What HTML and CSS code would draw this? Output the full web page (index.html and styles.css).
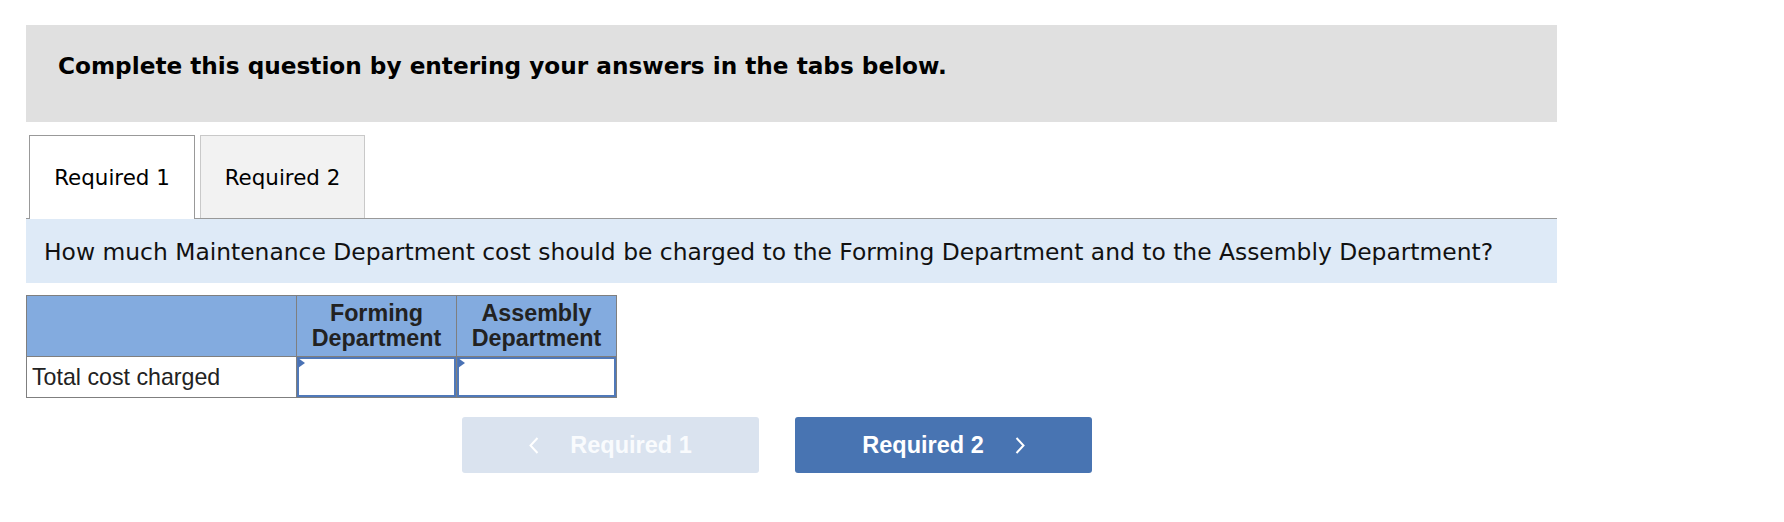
FILE: index.html
```html
<!DOCTYPE html>
<html lang="en">
<head>
<meta charset="utf-8">
<title>Required 1</title>
<link rel="stylesheet" href="styles.css">
</head>
<body>
<div class="wrap">
  <div class="banner">Complete this question by entering your answers in the tabs below.</div>

  <div class="tabs">
    <div class="tab tab-active">Required 1</div>
    <div class="tab tab-inactive">Required 2</div>
  </div>

  <div class="question">How much Maintenance Department cost should be charged to the Forming Department and to the Assembly Department?</div>

  <table class="grid">
    <colgroup>
      <col class="col-label">
      <col class="col-val">
      <col class="col-val">
    </colgroup>
    <thead>
      <tr>
        <th class="head-blank"></th>
        <th class="head">Forming<br>Department</th>
        <th class="head">Assembly<br>Department</th>
      </tr>
    </thead>
    <tbody>
      <tr>
        <td class="label">Total cost charged</td>
        <td class="cell"><div class="input"></div></td>
        <td class="cell"><div class="input"></div></td>
      </tr>
    </tbody>
  </table>

  <div class="nav">
    <div class="btn btn-prev">
      <svg class="chev" width="10" height="17" viewBox="0 0 10 17"><polyline points="8.5,1 1.5,8.5 8.5,16" fill="none" stroke="#ffffff" stroke-width="2"/></svg>
      <span>Required 1</span>
    </div>
    <div class="btn btn-next">
      <span>Required 2</span>
      <svg class="chev" width="10" height="17" viewBox="0 0 10 17"><polyline points="1.5,1 8.5,8.5 1.5,16" fill="none" stroke="#ffffff" stroke-width="2"/></svg>
    </div>
  </div>
</div>
</body>
</html>
```
FILE: styles.css
```css
html, body {
  margin: 0;
  padding: 0;
  background: #ffffff;
}

body {
  font-family: "DejaVu Sans", Verdana, sans-serif;
  color: #000;
}

.wrap {
  width: 1531px;
  padding: 25px 0 0 26px;
}

.banner {
  box-sizing: border-box;
  height: 97px;
  background: #e0e0e0;
  padding: 27px 0 0 32px;
  font-size: 23.2px;
  font-weight: bold;
  color: #000;
}

.tabs {
  display: flex;
  align-items: flex-start;
  gap: 5px;
  margin-top: 13px;
  padding-left: 3px;
  height: 83px;
  border-bottom: 1px solid #999999;
}

.tab {
  box-sizing: border-box;
  display: flex;
  align-items: center;
  justify-content: center;
  font-size: 21.4px;
  color: #000;
}

.tab-active {
  width: 166px;
  height: 84px;
  background: #ffffff;
  border: 1px solid #999999;
  border-bottom: none;
  position: relative;
  z-index: 1;
}

.tab-inactive {
  width: 165px;
  height: 83px;
  background: #f2f2f2;
  border: 1px solid #c9c9c9;
  border-bottom: none;
}

.question {
  box-sizing: border-box;
  height: 64px;
  background: #deeaf7;
  padding: 19px 0 0 18px;
  font-size: 23.4px;
  color: #111;
  white-space: nowrap;
}

.grid {
  margin-top: 12px;
  border-collapse: collapse;
  table-layout: fixed;
  width: 591px;
  font-family: "Liberation Sans", Arial, sans-serif;
  color: #222;
}

.col-label { width: 270px; }
.col-val { width: 160px; }

.grid th,
.grid td {
  border: 1px solid #7f7f7f;
  padding: 0;
}

.grid thead th {
  background: #83abdf;
  height: 60px;
}

.head {
  font-size: 23.3px;
  font-weight: bold;
  line-height: 25px;
  text-align: center;
  vertical-align: middle;
}

.label {
  font-size: 23.2px;
  padding-left: 5px !important;
  vertical-align: middle;
  white-space: nowrap;
}

.cell {
  height: 40px;
  vertical-align: top;
}

.input {
  position: relative;
  box-sizing: border-box;
  height: 40px;
  border: 2px solid #5079b9;
  background: #ffffff;
}

.input::before {
  content: "";
  position: absolute;
  left: -1px;
  top: -1px;
  width: 0;
  height: 0;
  border-left: 7px solid #4a72b5;
  border-top: 5.5px solid transparent;
  border-bottom: 5.5px solid transparent;
}

.nav {
  display: flex;
  gap: 36px;
  margin-top: 19px;
  padding-left: 436px;
}

.btn {
  box-sizing: border-box;
  width: 297px;
  height: 56px;
  border-radius: 3px;
  display: flex;
  align-items: center;
  justify-content: center;
  gap: 31px;
  font-family: "Liberation Sans", Arial, sans-serif;
  font-weight: bold;
  font-size: 23.5px;
  color: #ffffff;
}

.btn-prev {
  background: #dae3ef;
  color: #f9fbfd;
}

.btn-next {
  background: #4874b2;
}

.chev {
  display: block;
  flex: none;
}
```
